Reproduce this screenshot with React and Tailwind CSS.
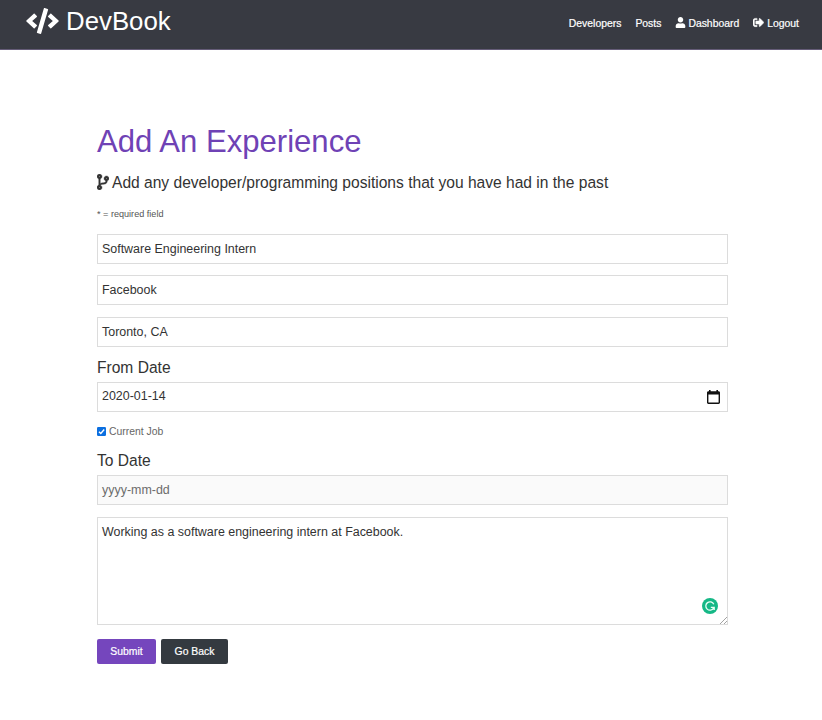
import { FaCode, FaUser, FaSignOutAlt, FaCodeBranch } from "react-icons/fa";

function Field({ children, className = "text-[#333]" }) {
  return (
    <div
      className={`flex h-[30px] items-center border border-[#dcdcdc] px-1 text-[12.45px] leading-[16px] ${className}`}
    >
      {children}
    </div>
  );
}

function CalendarIcon() {
  return (
    <svg className="mt-px mr-[3px] h-[14px] w-[13px]" viewBox="0 0 13 14">
      <path
        fill="#111"
        fillRule="evenodd"
        d="M2 0h1.6v1.3h5.8V0H11v1.3h.6c.8 0 1.4.6 1.4 1.4v9.9c0 .8-.6 1.4-1.4 1.4H1.400C.6 14 0 13.400 0 12.600V2.700c0-.8.6-1.400 1.400-1.400H2zM1.400 4.600v8h10.200v-8z"
      />
    </svg>
  );
}

function GrammarBadge() {
  return (
    <svg className="absolute right-[9px] bottom-[10px] size-4" viewBox="0 0 16 16">
      <circle cx="8" cy="8" r="8" fill="#15b886" />
      <path
        d="M11.800 6.200A4.200 4.200 0 1 0 11.600 10.200M8.800 9.300H12.200V12"
        fill="none"
        stroke="#e9fff7"
        strokeWidth="1.300"
      />
    </svg>
  );
}

export default function App() {
  return (
    <div className="min-h-[720px] bg-white font-['Liberation_Sans',Arial,sans-serif] text-[#333]">
      <nav className="flex h-[50px] items-center justify-between border-b border-[#655c78] bg-[#383a42] pr-[23px] pb-[5px] pl-[26px] text-white">
        <div className="flex items-center gap-[7px] pb-[2px] text-[25.8px] leading-[30px]">
          <FaCode className="h-[26px] w-[33px]" />
          <span>DevBook</span>
        </div>
        <div className="mt-[2px] flex items-center gap-[14px] text-[10.4px] leading-[14px] [-webkit-text-stroke:0.2px_white]">
          <span className="pt-px">Developers</span>
          <span className="pt-px">Posts</span>
          <span className="flex items-center gap-[2px]">
            <FaUser className="mb-px h-[11px] w-[11px]" />
            <span className="pt-px">Dashboard</span>
          </span>
          <span className="flex items-center gap-[3px]">
            <FaSignOutAlt className="mb-px size-[11px] stroke-white stroke-[24px]" />
            <span className="pt-px">Logout</span>
          </span>
        </div>
      </nav>

      <main className="ml-[97px] w-[631px] pt-[73px]">
        <h1 className="text-[31.1px] leading-[38px] text-[#6f42b5]">Add An Experience</h1>
        <p className="mt-[12px] flex items-center gap-[3px] text-[15.58px] leading-[20px]">
          <FaCodeBranch className="mb-[2px] h-[16px] w-[12px] stroke-[#333] stroke-[12px]" />
          Add any developer/programming positions that you have had in the past
        </p>
        <p className="mt-[15px] text-[9.1px] leading-[12px] text-[#555]">* = required field</p>

        <div className="mt-[14px] flex flex-col gap-[11.400px]">
          <Field>Software Engineering Intern</Field>
          <Field>Facebook</Field>
          <Field>Toronto, CA</Field>
        </div>

        <h4 className="mt-[11px] text-[15.58px] leading-[20px]">From Date</h4>
        <Field className="mt-1 justify-between pb-px text-[#333]">
          2020-01-14
          <CalendarIcon />
        </Field>
        <div className="mt-[13px] flex items-center gap-[3px] text-[10.4px] leading-[14px] text-[#666]">
          <svg className="mb-px size-[9px]" viewBox="0 0 9 9">
            <rect width="9" height="9" rx="1.200" fill="#0b6fe0" />
            <path d="M2 4.700L3.800 6.500L7.200 2.500" fill="none" stroke="white" strokeWidth="1.400" />
          </svg>
          Current Job
        </div>
        <h4 className="mt-[12px] text-[15.58px] leading-[20px]">To Date</h4>
        <Field className="mt-1 bg-[#fafafa] text-[#6c6c6c]">yyyy-mm-dd</Field>

        <div className="relative mt-[12px] h-[108px] border border-[#dcdcdc] px-1 pt-[6px] text-[12.45px] leading-[16px]">
          Working as a software engineering intern at Facebook.
          <GrammarBadge />
          <svg className="absolute right-0 bottom-0 size-[7px]" viewBox="0 0 7 7">
            <path d="M0 7L7 0M4 7L7 4" stroke="#999" strokeWidth="0.900" />
          </svg>
        </div>

        <div className="mt-[14px] flex gap-[5px] text-[10.4px] text-white [-webkit-text-stroke:0.2px_white]">
          <button className="h-[25px] w-[59px] rounded-[2px] bg-[#7546bd] pt-px">Submit</button>
          <button className="h-[25px] w-[67px] rounded-[2px] bg-[#343a40] pt-px">Go Back</button>
        </div>
      </main>
    </div>
  );
}
